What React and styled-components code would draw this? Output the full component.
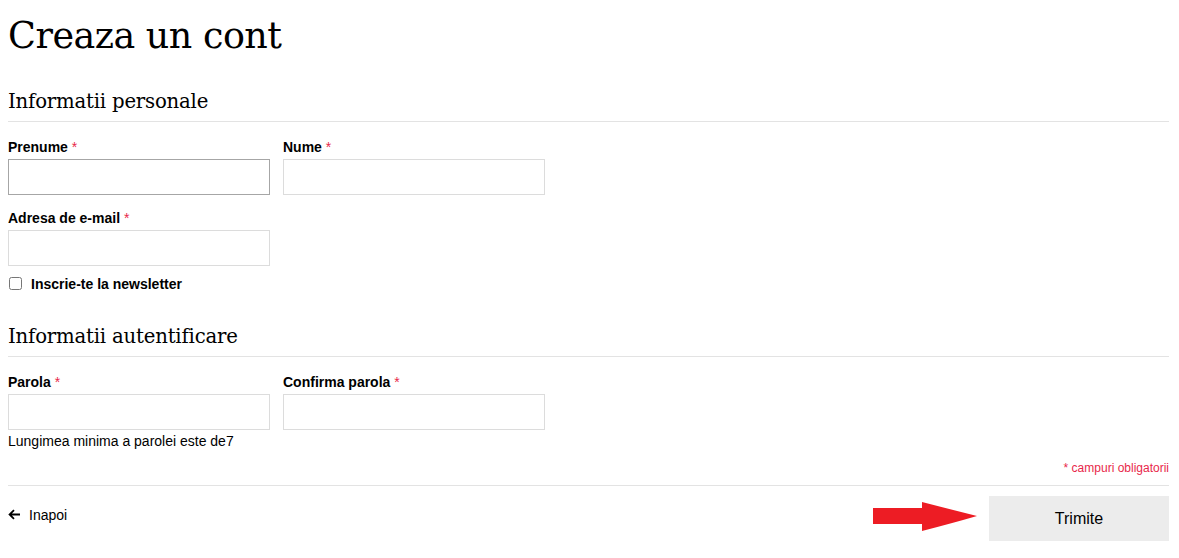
import React from "react";
import styled, { createGlobalStyle } from "styled-components";

const Global = createGlobalStyle`
  body { margin: 8px; font-family: "Liberation Sans", Arial, sans-serif; color: #000; background: #fff; }
  * { box-sizing: border-box; }
`;

const Page = styled.div`
  width: 1161px;
`;

const Title = styled.h1`
  font-family: "DejaVu Serif", "Liberation Serif", serif;
  font-weight: 400;
  font-size: 36.5px;
  line-height: 1;
  margin: 10px 0 0;
  letter-spacing: -0.5px;
`;

const Section = styled.fieldset`
  border: 0;
  margin: ${p => p.$top}px 0 0;
  padding: 0;
`;

const Legend = styled.h2`
  font-family: "DejaVu Serif", "Liberation Serif", serif;
  font-weight: 400;
  font-size: 19.7px;
  line-height: 26px;
  margin: 0;
  padding-bottom: 6px;
  border-bottom: 1px solid #e3e3e3;
  letter-spacing: -0.2px;
`;

const Row = styled.div`
  display: flex;
  gap: 13px;
  margin-top: ${p => p.$top ?? 0}px;
`;

const Field = styled.div`
  width: 262px;
  display: flex;
  flex-direction: column;
`;

const Label = styled.label`
  font-weight: 700;
  font-size: 14px;
  line-height: 16px;
  margin-bottom: 4px;
  &::after {
    content: " *";
    color: #e8274a;
    font-weight: 400;
  }
`;

const Input = styled.input`
  height: 36px;
  width: 262px;
  border: 1px solid ${p => (p.$focus ? "#a6a6a6" : "#dcdcdc")};
  background: #fff;
  outline: none;
`;

const CheckRow = styled.label`
  display: flex;
  align-items: center;
  gap: 9px;
  margin-top: 10px;
  font-weight: 700;
  font-size: 14px;
  input { margin: 0 0 0 1px; width: 13px; height: 13px; }
`;

const Hint = styled.div`
  font-size: 14px;
  line-height: 16px;
  margin-top: 3px;
`;

const Required = styled.div`
  text-align: right;
  color: #e8274a;
  font-size: 12px;
  margin-top: 12px;
  padding-bottom: 10px;
  border-bottom: 1px solid #e3e3e3;
`;

const Actions = styled.div`
  display: flex;
  align-items: center;
  justify-content: space-between;
  margin-top: 10px;
`;

const Back = styled.a`
  display: flex;
  align-items: center;
  gap: 8px;
  font-size: 14px;
  color: #000;
  text-decoration: none;
  margin-top: -7px;
`;

const Right = styled.div`
  display: flex;
  align-items: center;
  gap: 12px;
`;

const Arrow = styled.svg`
  margin-bottom: 3px;
`;

const Button = styled.button`
  width: 180px;
  height: 45px;
  border: 0;
  background: #ececec;
  font-family: "Liberation Sans", Arial, sans-serif;
  font-size: 16px;
  color: #000;
  padding-top: 2px;
`;

export default function App() {
  return (
    <Page>
      <Global />
      <Title>Creaza un cont</Title>
      <Section $top={34}>
        <Legend>Informatii personale</Legend>
        <Row $top={17}>
          <Field>
            <Label>Prenume</Label>
            <Input $focus />
          </Field>
          <Field>
            <Label>Nume</Label>
            <Input />
          </Field>
        </Row>
        <Row $top={15}>
          <Field>
            <Label>Adresa de e-mail</Label>
            <Input />
          </Field>
        </Row>
        <CheckRow>
          <input type="checkbox" />
          Inscrie-te la newsletter
        </CheckRow>
      </Section>
      <Section $top={32}>
        <Legend>Informatii autentificare</Legend>
        <Row $top={17}>
          <Field>
            <Label>Parola</Label>
            <Input />
            <Hint>Lungimea minima a parolei este de7</Hint>
          </Field>
          <Field>
            <Label>Confirma parola</Label>
            <Input />
          </Field>
        </Row>
      </Section>
      <Required>* campuri obligatorii</Required>
      <Actions>
        <Back href="#">
          <svg width="13" height="11" viewBox="0 0 13 11" fill="none" stroke="#000" strokeWidth="1.8">
            <path d="M12 5.5H2M6 1.2L1.6 5.5 6 9.8" />
          </svg>
          Inapoi
        </Back>
        <Right>
          <Arrow width="104" height="29" viewBox="0 0 104 29">
            <path d="M0 6H49V0Q80 8 104 14Q80 21 49 29V22H0Z" fill="#ed1c24" />
          </Arrow>
          <Button>Trimite</Button>
        </Right>
      </Actions>
    </Page>
  );
}
